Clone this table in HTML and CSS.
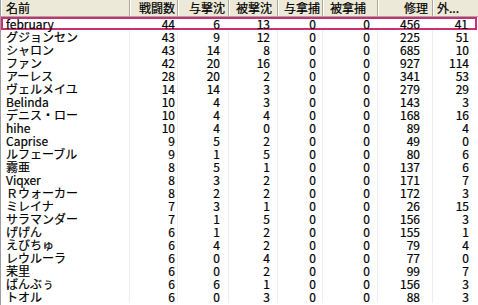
FILE: index.html
```html
<!DOCTYPE html>
<html lang="ja">
<head>
<meta charset="utf-8">
<link rel="stylesheet" href="styles.css">
</head>
<body>
<div class="list">
  <div class="head">
    <div class="h name">名前</div>
    <div class="h">戦闘数</div>
    <div class="h">与撃沈</div>
    <div class="h">被撃沈</div>
    <div class="h">与拿捕</div>
    <div class="h">被拿捕</div>
    <div class="h">修理</div>
    <div class="h trunc">外...</div>
  </div>
  <div class="body">
    <div class="row sel"><div class="c name">february</div><div class="c">44</div><div class="c">6</div><div class="c">13</div><div class="c">0</div><div class="c">0</div><div class="c">456</div><div class="c">41</div></div>
    <div class="row"><div class="c name">グジョンセン</div><div class="c">43</div><div class="c">9</div><div class="c">12</div><div class="c">0</div><div class="c">0</div><div class="c">225</div><div class="c">51</div></div>
    <div class="row"><div class="c name">シャロン</div><div class="c">43</div><div class="c">14</div><div class="c">8</div><div class="c">0</div><div class="c">0</div><div class="c">685</div><div class="c">10</div></div>
    <div class="row"><div class="c name">ファン</div><div class="c">42</div><div class="c">20</div><div class="c">16</div><div class="c">0</div><div class="c">0</div><div class="c">927</div><div class="c">114</div></div>
    <div class="row"><div class="c name">アーレス</div><div class="c">28</div><div class="c">20</div><div class="c">2</div><div class="c">0</div><div class="c">0</div><div class="c">341</div><div class="c">53</div></div>
    <div class="row"><div class="c name">ヴェルメイユ</div><div class="c">14</div><div class="c">14</div><div class="c">3</div><div class="c">0</div><div class="c">0</div><div class="c">279</div><div class="c">29</div></div>
    <div class="row"><div class="c name">Belinda</div><div class="c">10</div><div class="c">4</div><div class="c">3</div><div class="c">0</div><div class="c">0</div><div class="c">143</div><div class="c">3</div></div>
    <div class="row"><div class="c name">デニス・ロー</div><div class="c">10</div><div class="c">4</div><div class="c">4</div><div class="c">0</div><div class="c">0</div><div class="c">168</div><div class="c">16</div></div>
    <div class="row"><div class="c name">hihe</div><div class="c">10</div><div class="c">4</div><div class="c">0</div><div class="c">0</div><div class="c">0</div><div class="c">89</div><div class="c">4</div></div>
    <div class="row"><div class="c name">Caprise</div><div class="c">9</div><div class="c">5</div><div class="c">2</div><div class="c">0</div><div class="c">0</div><div class="c">49</div><div class="c">0</div></div>
    <div class="row"><div class="c name">ルフェーブル</div><div class="c">9</div><div class="c">1</div><div class="c">5</div><div class="c">0</div><div class="c">0</div><div class="c">80</div><div class="c">6</div></div>
    <div class="row"><div class="c name">霧亜</div><div class="c">8</div><div class="c">5</div><div class="c">1</div><div class="c">0</div><div class="c">0</div><div class="c">137</div><div class="c">6</div></div>
    <div class="row"><div class="c name">Viqxer</div><div class="c">8</div><div class="c">3</div><div class="c">2</div><div class="c">0</div><div class="c">0</div><div class="c">171</div><div class="c">7</div></div>
    <div class="row"><div class="c name">Ｒウォーカー</div><div class="c">8</div><div class="c">2</div><div class="c">2</div><div class="c">0</div><div class="c">0</div><div class="c">172</div><div class="c">3</div></div>
    <div class="row"><div class="c name">ミレイナ</div><div class="c">7</div><div class="c">3</div><div class="c">1</div><div class="c">0</div><div class="c">0</div><div class="c">26</div><div class="c">15</div></div>
    <div class="row"><div class="c name">サラマンダー</div><div class="c">7</div><div class="c">1</div><div class="c">5</div><div class="c">0</div><div class="c">0</div><div class="c">156</div><div class="c">3</div></div>
    <div class="row"><div class="c name">げげん</div><div class="c">6</div><div class="c">1</div><div class="c">2</div><div class="c">0</div><div class="c">0</div><div class="c">155</div><div class="c">1</div></div>
    <div class="row"><div class="c name">えびちゅ</div><div class="c">6</div><div class="c">4</div><div class="c">2</div><div class="c">0</div><div class="c">0</div><div class="c">79</div><div class="c">4</div></div>
    <div class="row"><div class="c name">レウルーラ</div><div class="c">6</div><div class="c">0</div><div class="c">4</div><div class="c">0</div><div class="c">0</div><div class="c">77</div><div class="c">0</div></div>
    <div class="row"><div class="c name">茉里</div><div class="c">6</div><div class="c">0</div><div class="c">2</div><div class="c">0</div><div class="c">0</div><div class="c">99</div><div class="c">7</div></div>
    <div class="row"><div class="c name">ばんぶぅ</div><div class="c">6</div><div class="c">6</div><div class="c">1</div><div class="c">0</div><div class="c">0</div><div class="c">156</div><div class="c">3</div></div>
    <div class="row"><div class="c name">トオル</div><div class="c">6</div><div class="c">0</div><div class="c">3</div><div class="c">0</div><div class="c">0</div><div class="c">88</div><div class="c">3</div></div>
  </div>
</div>
</body>
</html>
```

FILE: styles.css
```css
* { box-sizing: border-box; }
html, body { margin: 0; padding: 0; background: #fff; }
body { width: 478px; height: 305px; overflow: hidden; }

.list {
  width: 478px;
  height: 305px;
  overflow: hidden;
  border-left: 1px solid #9d9d9d;
  font-family: "Noto Sans CJK JP", "Noto Sans", sans-serif;
  font-size: 12px;
  color: #000;
  -webkit-text-stroke: 0.2px #000;
}

.head, .row {
  display: grid;
  grid-template-columns: 129px 48px 51px 49px 45px 55px 55px 1fr;
}

.head {
  height: 17px;
  background: #ece9d8;
  border-bottom: 1px solid #aca899;
}

.h {
  height: 16px;
  line-height: 16px;
  padding: 0 4px;
  text-align: right;
  white-space: nowrap;
  border-right: 1px solid #aca899;
  box-shadow: inset 1px 0 0 #fff;
}
.h.name { text-align: left; padding-left: 5px; }
.h.trunc { text-align: left; border-right: none; padding-left: 4px; }
.h:nth-child(2) { padding-right: 2px; }
.h:nth-child(3) { padding-right: 3px; }
.h:nth-child(4) { padding-right: 5px; }
.h:nth-child(5) { padding-right: 2px; }
.h:nth-child(6) { padding-right: 11px; }
.h:nth-child(7) { padding-right: 4px; }

.row { height: 13px; }

.c {
  height: 13px;
  line-height: 13px;
  padding: 0 7px 0 5px;
  text-align: right;
  white-space: nowrap;
  border-right: 1px solid #eeeeee;
}
.c.name { text-align: left; }
.c:nth-child(2) { padding-right: 2px; }
.c:nth-child(3) { padding-right: 8px; }
.c:nth-child(4) { padding-right: 7px; }
.c:nth-child(5) { padding-right: 6px; }
.c:nth-child(6) { padding-right: 7px; }
.c:nth-child(7) { padding-right: 12px; }
.c:nth-child(8) { padding-right: 9px; border-right: none; }

.row.sel {
  margin-right: 1px;
  box-shadow: inset 0 0 0 2px #c92f78;
}
.row.sel .c { border-right-color: transparent; }
```
